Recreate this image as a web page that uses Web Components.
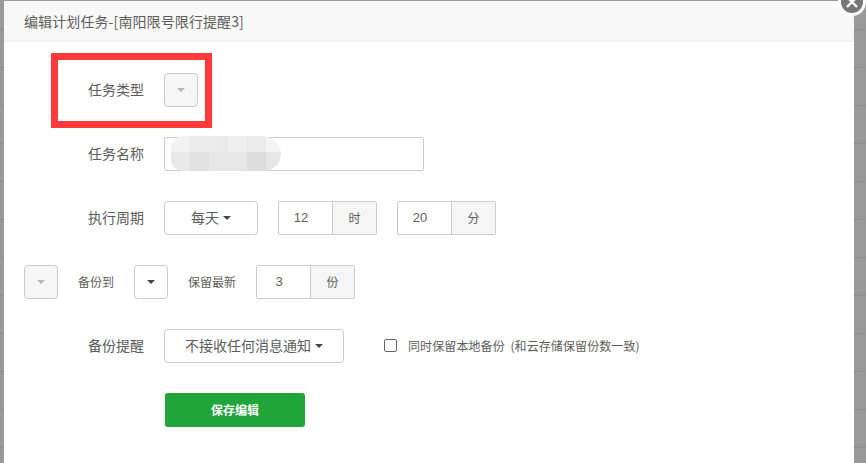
<!DOCTYPE html>
<html><head><meta charset="utf-8">
<style>
html,body{margin:0;height:463px;overflow:hidden}
body{font-family:"Noto Sans CJK SC","Liberation Sans",sans-serif;color:#555;
background:repeating-linear-gradient(to bottom,#999 0,#999 29px,#8c8c8c 29px,#8c8c8c 30px,#999 30px,#999 38px)}
</style></head><body>
<edit-dialog heading="编辑计划任务-[南阳限号限行提醒3]">
  <form-row indent>
    <row-label slot="label">任务类型</row-label>
    <select-button disabled></select-button>
    <highlight-box></highlight-box>
  </form-row>
  <form-row indent>
    <row-label slot="label">任务名称</row-label>
    <name-input></name-input>
  </form-row>
  <form-row indent>
    <row-label slot="label">执行周期</row-label>
    <select-button width="94">每天</select-button>
    <unit-input value="12" unit="时" style="margin-left:20px"></unit-input>
    <unit-input value="20" unit="分" style="margin-left:20px"></unit-input>
  </form-row>
  <form-row>
    <select-button disabled></select-button>
    <small-label>备份到</small-label>
    <select-button></select-button>
    <small-label>保留最新</small-label>
    <unit-input value="3" unit="份"></unit-input>
  </form-row>
  <form-row indent>
    <row-label slot="label">备份提醒</row-label>
    <select-button width="180">不接收任何消息通知</select-button>
    <check-note>同时保留本地备份&nbsp;&nbsp;(和云存储保留份数一致)</check-note>
  </form-row>
  <save-button>保存编辑</save-button>
</edit-dialog>
<script>
function def(name, html, attrs, init){
  customElements.define(name, class extends HTMLElement{
    constructor(){super();this.attachShadow({mode:'open'}).innerHTML=html;}
    connectedCallback(){ if(init) init(this, this.shadowRoot); }
  });
}
def('edit-dialog',`<style>
:host{display:flex;flex-direction:column;box-sizing:border-box;position:relative;width:850px;height:462px;margin:1px 0 0 4px;background:#fff}
header{height:41px;box-sizing:border-box;background:#f8f8f8;border-bottom:1px solid #eee;padding-left:20px;font-size:14px;line-height:41px;color:#5c5c5c;letter-spacing:.1px;flex:none}
main{padding-top:31px;display:flex;flex-direction:column;gap:30px}
.close{position:absolute;left:834px;top:-13px;width:28px;height:28px;box-sizing:border-box;border-radius:50%;background:#777;border:3px solid #fff;display:flex;align-items:center;justify-content:center}
</style><header></header><main><slot></slot></main>
<span class="close"><svg width="14" height="14" viewBox="0 0 14 14"><path d="M2 2L12 12M12 2L2 12" stroke="#fff" stroke-width="2.4" fill="none"/></svg></span>`,0,(el,s)=>{s.querySelector('header').textContent=el.getAttribute('heading');});
def('form-row',`<style>
:host{display:flex;align-items:center;height:34px;padding-left:20px;position:relative}
:host([indent]){padding-left:0}
.l{display:none;width:160px;padding:0 20px 5px 0;box-sizing:border-box;text-align:right;flex:none}
:host([indent]) .l{display:block}
</style><div class="l"><slot name="label"></slot></div><slot></slot>`);
def('row-label',`<style>:host{display:inline;font-size:14px;color:#5c5c5c}</style><slot></slot>`);
def('small-label',`<style>:host{display:block;font-size:12px;color:#5c5c5c;margin:0 20px;line-height:34px}</style><slot></slot>`);
def('select-button',`<style>
:host{display:inline-flex;align-items:center;justify-content:center;box-sizing:border-box;width:34px;height:34px;border:1px solid #ccc;border-radius:4px;background:#fff;font-size:14px;color:#5c5c5c;gap:4px;flex:none;padding-bottom:2px}
:host([disabled]){background:#f6f6f6}
i{display:block;width:0;height:0;border-left:4px solid transparent;border-right:4px solid transparent;border-top:4px solid #444;margin-top:1px}
:host([disabled]) i{border-top-color:#b5b5b5}
</style><slot></slot><i></i>`,0,(el)=>{const w=el.getAttribute('width');if(w)el.style.width=w+'px';});
def('name-input',`<style>
:host{display:block;position:relative;box-sizing:border-box;width:260px;height:34px;border:1px solid #ccc;border-radius:2px;background:#fff}
.m{position:absolute;left:6px;top:-2px;width:110px;height:35px;border-radius:12px 20px 18px 12px/12px 18px 17px 12px;overflow:hidden;display:grid;grid-template-columns:repeat(5,19px) 15px;grid-template-rows:16px 19px}
</style><div class="m">
<b style="background:#f2f2f2"></b><b style="background:#ebebeb"></b><b style="background:#eaeaea"></b><b style="background:#efefef"></b><b style="background:#ebebeb"></b><b style="background:#f3f3f3"></b>
<b style="background:#e9e9e9"></b><b style="background:#e2e2e2"></b><b style="background:#e6e6e6"></b><b style="background:#e6e6e6"></b><b style="background:#dcdcdc"></b><b style="background:#e6e6e6"></b>
</div>`);
def('unit-input',`<style>
:host{display:inline-flex;box-sizing:border-box;height:34px;width:99px;border:1px solid #ccc;border-radius:2px;font-size:12px;color:#5c5c5c;flex:none}
.v{width:53px;text-align:center;line-height:32px;padding-right:9px;box-sizing:border-box;font-family:"Liberation Sans",sans-serif;font-size:13px}
.u{flex:1;background:#f5f5f5;border-left:1px solid #ccc;text-align:center;line-height:32px}
</style><span class="v"></span><span class="u"></span>`,0,(el,s)=>{s.querySelector('.v').textContent=el.getAttribute('value');s.querySelector('.u').textContent=el.getAttribute('unit');});
def('check-note',`<style>
:host{display:inline-flex;align-items:center;margin-left:40px;font-size:12px;color:#5c5c5c;letter-spacing:.1px;padding-bottom:1px}
i{display:block;box-sizing:border-box;width:13px;height:13px;border:1px solid #666;border-radius:2px;background:#fff;margin-right:11px}
</style><i></i><slot></slot>`);
def('save-button',`<style>
:host{display:block;box-sizing:border-box;width:140px;height:34px;margin:0 0 0 161px;background:#20a53a;border-radius:3px;color:#fff;font-size:12px;font-weight:700;line-height:34px;text-align:center}
</style><slot></slot>`);
def('highlight-box',`<style>
:host{display:block;position:absolute;left:47px;top:-20px;width:161px;height:75px;box-sizing:border-box;border:7px solid #fe3a3a;pointer-events:none}
</style>`);
</script>
</body></html>
